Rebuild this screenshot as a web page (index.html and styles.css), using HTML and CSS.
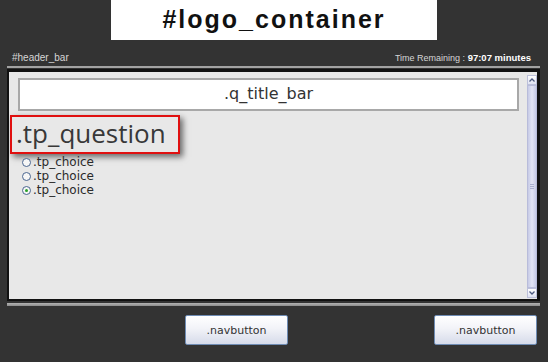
FILE: index.html
```html
<!DOCTYPE html>
<html lang="en">

<head>
    <meta charset="UTF-8">
    <meta name="viewport" content="width=device-width, initial-scale=1.0">
    <title>Test template</title>
    <link rel="stylesheet" href="styles.css">
</head>

<body>
    <div class="logo_container">#logo_container</div>

    <div class="header_bar">
        <span class="header_label">#header_bar</span>
        <span class="timer">Time Remaining : <b>97:07 minutes</b></span>
    </div>
    <div class="rule"></div>

    <div class="frame">
        <div class="content">
            <div class="q_title_bar">.q_title_bar</div>
            <div class="tp_question">.tp_question</div>
            <ul class="choices">
                <li><span class="radio"></span>.tp_choice</li>
                <li><span class="radio"></span>.tp_choice</li>
                <li><span class="radio checked"></span>.tp_choice</li>
            </ul>
        </div>
        <div class="scrollbar">
            <div class="sb_btn">
                <svg width="6" height="4" viewBox="0 0 6 4"><path d="M0.5 3.5 L3 1 L5.5 3.5" fill="none" stroke="#4d5a80" stroke-width="1.3"/></svg>
            </div>
            <div class="sb_thumb"><span class="grip"></span></div>
            <div class="sb_btn">
                <svg width="6" height="4" viewBox="0 0 6 4"><path d="M0.5 0.5 L3 3 L5.5 0.5" fill="none" stroke="#4d5a80" stroke-width="1.3"/></svg>
            </div>
        </div>
    </div>
    <div class="rule rule_bottom"></div>

    <div class="nav">
        <button class="navbutton">.navbutton</button>
        <button class="navbutton">.navbutton</button>
    </div>
</body>

</html>
```

FILE: styles.css
```css
body {
    margin: 0;
    background: #333333;
    font-family: 'DejaVu Sans', sans-serif;
    height: 362px;
    overflow: hidden;
}

.logo_container {
    width: 326px;
    height: 40px;
    margin: 0 auto;
    background: #fff;
    color: #111;
    font-family: 'Liberation Sans', Arial, sans-serif;
    font-weight: bold;
    font-size: 25px;
    letter-spacing: 2px;
    line-height: 38px;
    text-align: center;
}

.header_bar {
    height: 26px;
    display: flex;
    justify-content: space-between;
    align-items: flex-end;
    padding: 0 9px 0 12px;
    box-sizing: border-box;
    width: 540px;
    font-family: 'Liberation Sans', Arial, sans-serif;
    font-size: 10px;
    line-height: 12px;
    color: #d6d6d6;
}

.header_label {
    padding-bottom: 2px;
}

.timer {
    padding-bottom: 2px;
    font-size: 9px;
}

.timer b {
    color: #fff;
    font-size: 9.5px;
}

.rule {
    width: 533px;
    height: 2px;
    margin: 0 0 1px 7px;
    background: #a2a2a2;
}

.rule_bottom {
    height: 3px;
    margin-top: 2px;
    background: linear-gradient(#b4b4b4, #8c8c8c);
}

.frame {
    display: flex;
    width: 533px;
    height: 232px;
    margin-left: 7px;
    box-sizing: border-box;
    border: 2px solid #111;
    border-top-width: 3px;
    border-right-width: 3px;
    background: #e8e8e8;
}

.content {
    flex: 1;
    padding: 6px 8px 0 9px;
}

.q_title_bar {
    height: 33px;
    box-sizing: border-box;
    border: 2px solid #a8a8a8;
    background: #fff;
    color: #333;
    font-size: 16px;
    line-height: 28px;
    text-align: center;
}

.tp_question {
    display: inline-block;
    width: 170px;
    height: 39px;
    box-sizing: border-box;
    margin: 4px 0 0 -8px;
    padding-left: 4px;
    border: 2px solid #e01010;
    background: #e8e8e8;
    box-shadow: 3px 3px 6px rgba(0, 0, 0, 0.55);
    color: #383838;
    font-family: 'Open Sans', sans-serif;
    font-size: 26px;
    line-height: 32px;
    vertical-align: top;
}

.choices {
    list-style: none;
    margin: 1px 0 0;
    padding: 0 0 0 4px;
    font-size: 12px;
    line-height: 14px;
    color: #2a2a2a;
}

.choices li {
    display: flex;
    align-items: center;
}

.radio {
    width: 9px;
    height: 9px;
    box-sizing: border-box;
    margin-right: 2px;
    border: 1px solid #4a6690;
    border-radius: 50%;
    background: #f6f6f6;
    display: flex;
    align-items: center;
    justify-content: center;
}

.radio.checked::after {
    content: "";
    width: 3px;
    height: 3px;
    border-radius: 50%;
    background: #2aa02a;
}

.scrollbar {
    width: 10px;
    margin: 3px 0 1px;
    display: flex;
    flex-direction: column;
    background: #eeeef4;
}

.sb_btn {
    height: 10px;
    box-sizing: border-box;
    border: 1px solid #bcc0da;
    background: linear-gradient(#ffffff, #dfe2f2);
    display: flex;
    align-items: center;
    justify-content: center;
}

.sb_thumb {
    flex: 1;
    box-sizing: border-box;
    border: 1px solid #b8bcda;
    background: linear-gradient(90deg, #c6cae6, #e2e4f4 50%, #c6cae6);
    display: flex;
    align-items: center;
    justify-content: center;
}

.grip {
    width: 4px;
    height: 5px;
    background: repeating-linear-gradient(#aab0d0 0 1px, transparent 1px 2px);
}

.nav {
    display: flex;
    justify-content: space-between;
    width: 352px;
    margin: 9px 0 0 185px;
}

.navbutton {
    width: 103px;
    height: 30px;
    border: 1px solid #6f8cb4;
    border-radius: 2px;
    background: linear-gradient(#ffffff, #f2f3f8 45%, #d6dbea);
    color: #333;
    font-family: 'DejaVu Sans', sans-serif;
    font-size: 11px;
    padding: 0;
}
```
